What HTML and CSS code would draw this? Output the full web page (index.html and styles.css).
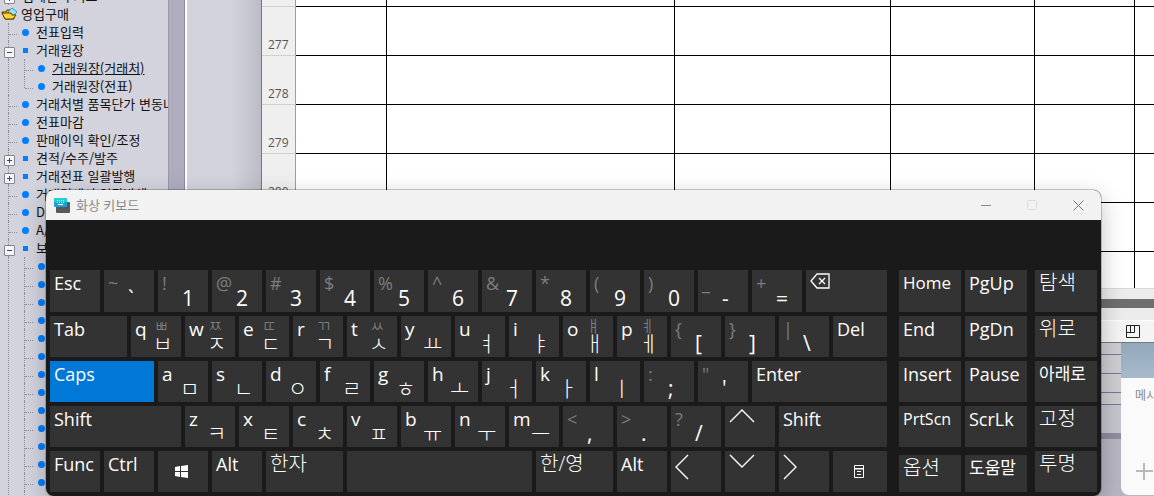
FILE: index.html
```html
<!DOCTYPE html>
<html lang="ko">
<head>
    <meta charset="UTF-8">
    <title>화상 키보드</title>
    <link rel="stylesheet" href="styles.css">
</head>
<body>
    <div class="app">
        <nav class="sidebar">
            <ul class="tree">
                <li class="closed"><a href="#">업체관리 기초</a></li>
            </ul>
            <div class="folder">
                <svg width="17" height="14" viewBox="0 0 17 14">
                    <path d="M1 5h4l1-2h3l1 3h3v6H4z" fill="#f5b800" stroke="#5a3a00"/>
                    <path d="M11 1l5 4-4 4-5-4z" fill="#9fe0f5" stroke="#3a9cc0"/>
                    <path d="M1 6h9l1 2h4l-3 4H4z" fill="#ffd632" stroke="#5a3a00"/>
                </svg>
                <a href="#">영업구매</a>
            </div>
            <ul class="tree">
                <li><i class="dot"></i><a href="#">전표입력</a></li>
                <li class="open"><i class="square"></i><a href="#">거래원장</a></li>
                <li class="group">
                    <ul>
                        <li><i class="dot"></i><a href="#" class="current">거래원장(거래처)</a></li>
                        <li class="last"><i class="dot"></i><a href="#">거래원장(전표)</a></li>
                    </ul>
                </li>
                <li><i class="dot"></i><a href="#">거래처별 품목단가 변동내역</a></li>
                <li><i class="dot"></i><a href="#">전표마감</a></li>
                <li><i class="dot"></i><a href="#">판매이익 확인/조정</a></li>
                <li class="closed"><i class="square"></i><a href="#">견적/수주/발주</a></li>
                <li class="closed"><i class="square"></i><a href="#">거래전표 일괄발행</a></li>
                <li><i class="dot"></i><a href="#">거래명세서 일괄발행</a></li>
                <li><i class="dot"></i><a href="#">DM</a></li>
                <li><i class="dot"></i><a href="#">A/S</a></li>
                <li class="open"><i class="square"></i><a href="#">보</a></li>
                <li class="group">
                    <ul>
                        <li><i class="dot"></i></li>
                        <li><i class="dot"></i></li>
                        <li><i class="dot"></i></li>
                        <li><i class="dot"></i></li>
                        <li><i class="dot"></i></li>
                        <li><i class="dot"></i></li>
                        <li><i class="dot"></i></li>
                        <li><i class="dot"></i></li>
                        <li><i class="dot"></i></li>
                        <li><i class="dot"></i></li>
                        <li><i class="dot"></i></li>
                        <li><i class="dot"></i></li>
                        <li><i class="dot"></i></li>
                        <li><i class="dot"></i></li>
                    </ul>
                </li>
            </ul>
        </nav>
        <div class="scrollbar"></div>
        <div class="gutter"></div>
        <main class="content">
            <div class="sheet">
                <table>
                    <colgroup>
                        <col class="c-num"><col class="c-a"><col class="c-b"><col class="c-c"><col class="c-d"><col class="c-e"><col>
                    </colgroup>
                    <tr><th>276</th><td></td><td></td><td></td><td></td><td></td><td></td></tr>
                    <tr><th>277</th><td></td><td></td><td></td><td></td><td></td><td></td></tr>
                    <tr><th>278</th><td></td><td></td><td></td><td></td><td></td><td></td></tr>
                    <tr><th>279</th><td></td><td></td><td></td><td></td><td></td><td></td></tr>
                    <tr><th>280</th><td></td><td></td><td></td><td></td><td></td><td></td></tr>
                    <tr><th>281</th><td></td><td></td><td></td><td></td><td></td><td></td></tr>
                    <tr><th>282</th><td></td><td></td><td></td><td></td><td></td><td></td></tr>
                </table>
            </div>
            <div class="hscroll"><div class="thumb"></div></div>
            <div class="statusbar">
                <svg width="14" height="14" viewBox="0 0 14 14" fill="none" stroke="#222">
                    <path d="M.5.5h13v12H.5zM.5 7.500h8V.5M4.500.5v7"/>
                </svg>
            </div>
            <div class="backpanel">
                <div class="line l1"></div>
                <div class="line l2"></div>
                <div class="line l2"></div>
                <div class="line l1"></div>
                <div class="band"></div>
            </div>
        </main>
    </div>

    <section class="chat">
        <div class="chat-head"></div>
        <div class="chat-input">메시지</div>
        <svg class="chat-plus" width="17" height="17" viewBox="0 0 17 17" stroke="#b9b9b9" stroke-width="2">
            <path d="M8 0v17M0 8h17"/>
        </svg>
    </section>

    <section class="osk">
        <header class="titlebar">
            <svg width="16" height="15" viewBox="0 0 16 15">
                <rect x="2" y="4" width="14" height="11" rx="1" fill="#55585c"/>
                <rect x="0" y="0" width="13" height="9" rx="1" fill="#18a4d8"/>
                <path d="M0 1q0-1 1-1h11q1 0 1 1v3H0z" fill="#22cfd0"/>
                <path d="M3 2.500h1m1 0h1m1 0h1m1 0h1M3 4.500h1m1 0h1m1 0h1m1 0h1M4 6.500h5" stroke="#fff"/>
            </svg>
            <h1>화상 키보드</h1>
            <button aria-label="최소화"><svg width="11" height="11"><path d="M0 5.500h10" stroke="#8a8a8a"/></svg></button>
            <button aria-label="최대화" disabled><svg width="11" height="11"><rect x=".5" y=".5" width="9" height="9" rx="1" fill="none" stroke="#dcdcdc"/></svg></button>
            <button aria-label="닫기"><svg width="11" height="11"><path d="M.5.5l10 10m0-10l-10 10" stroke="#777"/></svg></button>
        </header>

        <div class="keyboard">
            <div class="keys">
                <div class="row first">
                    <button class="key">Esc</button>
                    <button class="key"><span class="alt">~</span><span class="base">`</span></button>
                    <button class="key"><span class="alt">!</span><span class="base">1</span></button>
                    <button class="key"><span class="alt">@</span><span class="base">2</span></button>
                    <button class="key"><span class="alt">#</span><span class="base">3</span></button>
                    <button class="key"><span class="alt">$</span><span class="base">4</span></button>
                    <button class="key"><span class="alt">%</span><span class="base">5</span></button>
                    <button class="key"><span class="alt">^</span><span class="base">6</span></button>
                    <button class="key"><span class="alt">&amp;</span><span class="base">7</span></button>
                    <button class="key"><span class="alt">*</span><span class="base">8</span></button>
                    <button class="key"><span class="alt">(</span><span class="base">9</span></button>
                    <button class="key"><span class="alt">)</span><span class="base">0</span></button>
                    <button class="key"><span class="alt">_</span><span class="base">-</span></button>
                    <button class="key"><span class="alt">+</span><span class="base">=</span></button>
                    <button class="key w81 glyph" aria-label="Backspace">
                        <svg width="20" height="16" viewBox="0 0 20 16" fill="none" stroke="#fff" stroke-width="1.300"><path d="M7 1h12v14H7L1 8zM9 5l6 6m0-6l-6 6"/></svg>
                    </button>
                </div>
                <div class="row">
                    <button class="key w77">Tab</button>
                    <button class="key">q<span class="alt-ko">ㅃ</span><span class="ko">ㅂ</span></button>
                    <button class="key">w<span class="alt-ko">ㅉ</span><span class="ko">ㅈ</span></button>
                    <button class="key">e<span class="alt-ko">ㄸ</span><span class="ko">ㄷ</span></button>
                    <button class="key">r<span class="alt-ko">ㄲ</span><span class="ko">ㄱ</span></button>
                    <button class="key">t<span class="alt-ko">ㅆ</span><span class="ko">ㅅ</span></button>
                    <button class="key">y<span class="ko">ㅛ</span></button>
                    <button class="key">u<span class="ko">ㅕ</span></button>
                    <button class="key">i<span class="ko">ㅑ</span></button>
                    <button class="key">o<span class="alt-ko">ㅒ</span><span class="ko">ㅐ</span></button>
                    <button class="key">p<span class="alt-ko">ㅖ</span><span class="ko">ㅔ</span></button>
                    <button class="key"><span class="alt">{</span><span class="base">[</span></button>
                    <button class="key"><span class="alt">}</span><span class="base">]</span></button>
                    <button class="key"><span class="alt">|</span><span class="base">\</span></button>
                    <button class="key w54">Del</button>
                </div>
                <div class="row">
                    <button class="key w104 active">Caps</button>
                    <button class="key">a<span class="ko">ㅁ</span></button>
                    <button class="key">s<span class="ko">ㄴ</span></button>
                    <button class="key">d<span class="ko">ㅇ</span></button>
                    <button class="key">f<span class="ko">ㄹ</span></button>
                    <button class="key">g<span class="ko">ㅎ</span></button>
                    <button class="key">h<span class="ko">ㅗ</span></button>
                    <button class="key">j<span class="ko">ㅓ</span></button>
                    <button class="key">k<span class="ko">ㅏ</span></button>
                    <button class="key">l<span class="ko">ㅣ</span></button>
                    <button class="key"><span class="alt">:</span><span class="base">;</span></button>
                    <button class="key"><span class="alt">"</span><span class="base">'</span></button>
                    <button class="key w135">Enter</button>
                </div>
                <div class="row">
                    <button class="key w131">Shift</button>
                    <button class="key">z<span class="ko">ㅋ</span></button>
                    <button class="key">x<span class="ko">ㅌ</span></button>
                    <button class="key">c<span class="ko">ㅊ</span></button>
                    <button class="key">v<span class="ko">ㅍ</span></button>
                    <button class="key">b<span class="ko">ㅠ</span></button>
                    <button class="key">n<span class="ko">ㅜ</span></button>
                    <button class="key">m<span class="ko">ㅡ</span></button>
                    <button class="key"><span class="alt">&lt;</span><span class="base">,</span></button>
                    <button class="key"><span class="alt">&gt;</span><span class="base">.</span></button>
                    <button class="key"><span class="alt">?</span><span class="base">/</span></button>
                    <button class="key glyph" aria-label="위쪽">
                        <svg width="26" height="26" viewBox="0 0 26 26" fill="none" stroke="#fff" stroke-width="1.400"><path d="M1 13L13 1l12 12"/></svg>
                    </button>
                    <button class="key w108">Shift</button>
                </div>
                <div class="row">
                    <button class="key">Func</button>
                    <button class="key">Ctrl</button>
                    <button class="key center" aria-label="Windows">
                        <svg width="13" height="13" viewBox="0 0 13 13" fill="#fff"><path d="M0 2l5-1v5H0zM6 1l7-1v6H6zM0 7h5v5l-5-1zM6 7h7v6l-7-1z"/></svg>
                    </button>
                    <button class="key">Alt</button>
                    <button class="key w77 hangul">한자</button>
                    <button class="key w185" aria-label="Space"></button>
                    <button class="key w77 hangul">한/영</button>
                    <button class="key">Alt</button>
                    <button class="key glyph" aria-label="왼쪽">
                        <svg width="26" height="26" viewBox="0 0 26 26" fill="none" stroke="#fff" stroke-width="1.400"><path d="M13 1L1 13l12 12"/></svg>
                    </button>
                    <button class="key glyph" aria-label="아래쪽">
                        <svg width="26" height="26" viewBox="0 0 26 26" fill="none" stroke="#fff" stroke-width="1.400"><path d="M1 1l12 12L25 1"/></svg>
                    </button>
                    <button class="key glyph" aria-label="오른쪽">
                        <svg width="26" height="26" viewBox="0 0 26 26" fill="none" stroke="#fff" stroke-width="1.400"><path d="M1 1l12 12L1 25"/></svg>
                    </button>
                    <button class="key w54 center" aria-label="메뉴">
                        <svg width="10" height="13" viewBox="0 0 10 13" fill="none" stroke="#fff"><path d="M.5.5h9v12h-9zM.5 3.500h9M3 6.500h4M3 9.500h4"/><path d="M0 4h10"/></svg>
                    </button>
                </div>
            </div>

            <div class="keys nav">
                <div class="row first">
                    <button class="key small">Home</button>
                    <button class="key">PgUp</button>
                </div>
                <div class="row">
                    <button class="key">End</button>
                    <button class="key">PgDn</button>
                </div>
                <div class="row">
                    <button class="key">Insert</button>
                    <button class="key">Pause</button>
                </div>
                <div class="row">
                    <button class="key tiny">PrtScn</button>
                    <button class="key">ScrLk</button>
                </div>
                <div class="row short">
                    <button class="key hangul">옵션</button>
                    <button class="key small">도움말</button>
                </div>
            </div>

            <div class="keys side">
                <div class="row first"><button class="key hangul">탐색</button></div>
                <div class="row"><button class="key hangul">위로</button></div>
                <div class="row"><button class="key small">아래로</button></div>
                <div class="row"><button class="key hangul">고정</button></div>
                <div class="row"><button class="key hangul">투명</button></div>
            </div>
        </div>
    </section>
</body>
</html>
```
FILE: styles.css
```css
* {
    box-sizing: border-box;
}
body {
    margin: 0;
    height: 100vh;
    overflow: hidden;
    position: relative;
    font-family: "Open Sans", "Noto Sans CJK KR", sans-serif;
    font-size: 13px;
    color: #111;
    background-color: #d3d3de;
}
button {
    border: 0;
    padding: 0;
    font-family: inherit;
    color: inherit;
}
a {
    color: inherit;
    text-decoration: none;
}
.app {
    display: flex;
    height: 100%;
}

/* menu tree */
.sidebar {
    width: 168px;
    margin-top: -13px;
    overflow: hidden;
    white-space: nowrap;
    font-family: "Noto Sans CJK KR", sans-serif;
    line-height: 18px;
}
.tree,
.tree ul {
    list-style: none;
    margin: 0;
    padding: 0;
}
.folder {
    display: flex;
    align-items: center;
    gap: 3px;
    height: 18px;
    padding-left: 1px;
}
.tree {
    padding-left: 8px;
}
.tree ul {
    padding-left: 16px;
}
.tree li {
    position: relative;
    display: flex;
    align-items: center;
    height: 18px;
    padding-left: 14px;
}
.tree li.group {
    display: block;
    height: auto;
    padding-left: 0;
}
/* dotted connectors */
.tree li::before {
    content: "";
    position: absolute;
    left: 0;
    top: 0;
    height: 100%;
    border-left: 1px dotted #8e8e96;
}
.tree li.last::before {
    height: 11px;
}
.tree li:not(.group)::after {
    content: "";
    position: absolute;
    left: 1px;
    top: 11px;
    width: 8px;
    border-top: 1px dotted #8e8e96;
}
.tree li.open:not(.group)::after,
.tree li.closed:not(.group)::after {
    left: -4px;
    top: 6px;
    width: 9px;
    height: 9px;
    border: 1px solid #85858c;
    border-radius: 1px;
    background: linear-gradient(#2c4a9c, #2c4a9c) center / 5px 1px no-repeat, #f6f6f6;
}
.tree li.closed:not(.group)::after {
    background: linear-gradient(#2c4a9c, #2c4a9c) center / 5px 1px no-repeat, linear-gradient(#2c4a9c, #2c4a9c) center / 1px 5px no-repeat, #f6f6f6;
}
.dot,
.square {
    flex: none;
    width: 7px;
    height: 7px;
    margin-right: 7px;
    border-radius: 50%;
    background-color: #007eff;
}
.square {
    width: 5px;
    height: 5px;
    margin: 0 8px 0 1px;
    border-radius: 0;
}
.current {
    text-decoration: underline;
}
.scrollbar {
    width: 17px;
    background-color: #aeacbe;
    border-left: 1px solid #9a98ac;
    border-right: 1px solid #8c8aa4;
}
.gutter {
    width: 77px;
    border-left: 2px solid #fff;
    border-right: 1px solid #77777c;
    background: linear-gradient(90deg, #d3d3de 60%, #bcbcc6);
}

/* spreadsheet */
.content {
    flex: 1;
    min-width: 0;
    display: flex;
    flex-direction: column;
}
.sheet {
    flex: 1;
    min-height: 0;
    overflow: hidden;
    background-color: #fff;
}
.sheet table {
    width: 100%;
    margin-top: -42px;
    table-layout: fixed;
    border-collapse: separate;
    border-spacing: 0;
}
.c-num { width: 34px; }
.c-a { width: 91px; }
.c-b { width: 288px; }
.c-c { width: 216px; }
.c-d { width: 144px; }
.c-e { width: 100px; }
.sheet th,
.sheet td {
    height: 49px;
    padding: 0;
    border-right: 1px solid #000;
    border-bottom: 1px solid #000;
}
.sheet td:last-child {
    border-right: 0;
}
.sheet th {
    padding: 28px 0 0 6px;
    border-right-color: #9c9c9c;
    border-bottom-color: #d0d0d0;
    background-color: #efefef;
    font-size: 12px;
    line-height: 20px;
    font-weight: normal;
    text-align: left;
    color: #555;
}
.hscroll {
    height: 32px;
    padding: 10px 0 12px;
    border-top: 1px solid #d8d8d8;
    background-color: #ececec;
}
.thumb {
    height: 9px;
    background-color: #6e6e6e;
}
.statusbar {
    display: flex;
    align-items: center;
    justify-content: flex-end;
    height: 23px;
    padding-right: 14px;
    border-top: 1px solid #fff;
    border-bottom: 1px solid #777;
    background-color: #f4f4f4;
}
.backpanel {
    height: 153px;
    background-color: #b8b6c2;
}
.line {
    height: 12px;
    border-bottom: 1px solid #77759a;
    background-color: #cdcdd2;
}
.l2 {
    height: 19px;
}
.band {
    height: 34px;
    border-bottom: 6px solid #8f8d9f;
    background-color: #c5c5cd;
}

/* chat window at the right edge */
.chat {
    position: absolute;
    top: 343px;
    right: 0;
    bottom: 1px;
    width: 33px;
    overflow: hidden;
    border-radius: 0 0 0 8px;
    background-color: #fafafa;
    white-space: nowrap;
    font-size: 12px;
    color: #8a8a8a;
}
.chat-head {
    height: 35px;
    background: linear-gradient(#93a8bb, #a6bacb);
}
.chat-input {
    padding: 9px 0 0 14px;
    line-height: 18px;
}
.chat-plus {
    display: block;
    margin: 58px 0 0 15px;
}

/* on-screen keyboard */
.osk {
    position: absolute;
    top: 190px;
    left: 46px;
    right: 53px;
    overflow: hidden;
    border-radius: 8px;
    background-color: #1a1a1a;
    box-shadow: 0 0 0 1px rgba(0, 0, 0, 0.2), 0 8px 24px rgba(0, 0, 0, 0.25);
}
.titlebar {
    display: flex;
    align-items: center;
    height: 30px;
    padding-left: 8px;
    background-color: #f2f2f2;
}
.titlebar h1 {
    flex: 1;
    margin: 0 0 0 6px;
    font-size: 13px;
    line-height: 18px;
    font-weight: normal;
    color: #8a8a8a;
}
.titlebar button {
    display: flex;
    align-items: center;
    justify-content: center;
    width: 46px;
    height: 30px;
    background: none;
}
.keyboard {
    display: flex;
    padding: 50px 4px 4px;
}
.keys {
    flex: 837 1 0;
    min-width: 0;
    display: flex;
    flex-direction: column;
    gap: 4px;
}
.nav {
    flex-grow: 128;
    margin-left: 12px;
}
.side {
    flex-grow: 62;
    margin-left: 8px;
}
.row {
    display: flex;
    gap: 4px;
    height: 41px;
}
.row.first {
    height: 42px;
}
.row.short {
    padding-top: 4px;
}
.key {
    flex: 50 50 50px;
    min-width: 0;
    display: grid;
    grid-template-columns: 18px 1fr;
    grid-template-rows: 100%;
    padding: 0 0 0 4px;
    overflow: hidden;
    background-color: #333;
    color: #fff;
    font-size: 18px;
    line-height: 26px;
    text-align: left;
    white-space: nowrap;
}
.key:has(.ko) {
    font-size: 19px;
}
.key.active {
    background-color: #0078d7;
}
.key.small {
    font-size: 17px;
}
.key.tiny {
    font-size: 16px;
}
.key.hangul {
    font-size: 20px;
    font-weight: 300;
}
.key.glyph {
    padding-top: 3px;
    line-height: 0;
}
.key.center {
    display: flex;
    align-items: center;
    justify-content: center;
    padding: 0 3px 0 0;
}
.w54 { flex: 54 54 54px; }
.w77 { flex: 77 77 77px; }
.w81 { flex: 81 81 81px; }
.w104 { flex: 104 104 104px; }
.w108 { flex: 108 108 108px; }
.w131 { flex: 131 131 131px; }
.w135 { flex: 135 135 135px; }
.w185 { flex: 185 185 185px; }
.alt {
    grid-area: 1 / 1;
    color: #7d7d7d;
}
.base,
.ko {
    grid-area: 1 / 2;
    align-self: end;
    font-size: 21px;
    line-height: 28px;
}
.base {
    padding-left: 2px;
}
.ko {
    font-weight: 300;
}
.alt-ko {
    grid-area: 1 / 2;
    padding-left: 1px;
    font-size: 16px;
    line-height: 20px;
    font-weight: 300;
    color: #8a8a8a;
}
```
